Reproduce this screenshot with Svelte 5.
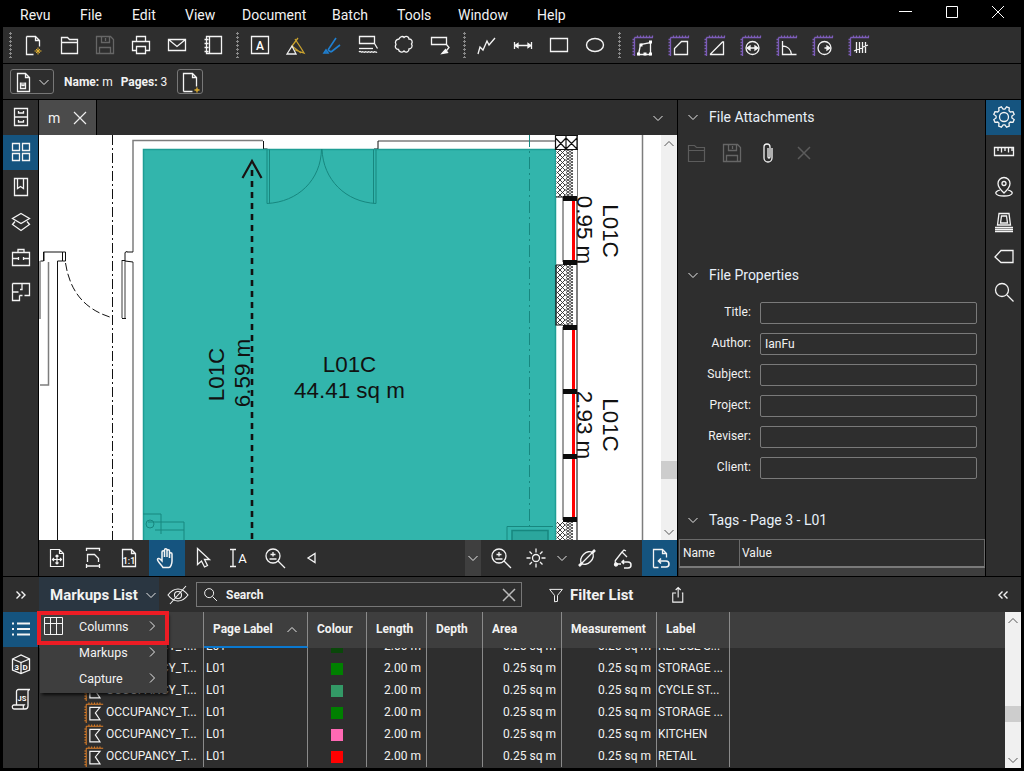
<script>
  const menu = [
    { name: 'Revu', w: 60 }, { name: 'File', w: 52 }, { name: 'Edit', w: 53 }, { name: 'View', w: 57 },
    { name: 'Document', w: 90 }, { name: 'Batch', w: 65 }, { name: 'Tools', w: 61 }, { name: 'Window', w: 79 }, { name: 'Help', w: 40 }
  ];

  // gear outline, easier to compute than to write out
  function gear() {
    let d = '';
    for (let i = 0; i < 8; i++) {
      const a = (i * Math.PI) / 4 - Math.PI / 8;
      const pts = [[8, -0.28], [10.5, -0.14], [10.5, 0.14], [8, 0.28]];
      for (const [r, o] of pts) {
        const x = 12 + r * Math.cos(a + o);
        const y = 12 + r * Math.sin(a + o);
        d += (d ? 'L' : 'M') + x.toFixed(1) + ' ' + y.toFixed(1);
      }
    }
    return d + 'z';
  }

  function ruler(col) {
    let d = 'M3.5 4.5H22M3.5 4.5V23';
    for (let i = 6; i <= 21; i += 3) d += `M${i + 0.5} 2.5v2M1.5 ${i + 0.5}h2`;
    return `<path stroke="${col}" d="${d}"/>`;
  }
  const rp = ruler('#7c5cb8');
  const dot = (x, y) => `<rect x="${x - 1.5}" y="${y - 1.5}" width="3" height="3" fill="#fff" stroke="none"/>`;

  const icons = {
    newdoc: '<path d="M5.5 3.5h9l4 4v6M14.5 3.5v4h4M5.5 3.5v18h7"/><path stroke="#e0b030" stroke-width="1" d="M17 14.500v7M13.500 18h7M15 16l4 4M19 16l-4 4"/>',
    folder: '<path d="M4.5 4.5h6l2 2h8v14h-16zM4.5 9.5h16"/>',
    save: '<path stroke="#666" d="M3.5 3.5h14l3 3v14h-17zM8.5 3.5v6h8v-6M12.5 5v3M6.5 20.5v-6h11v6"/>',
    print: '<path d="M7.5 8.5v-5h9v5M7.5 17.5h-4v-9h17v9h-4M7.5 13.5h9v7h-9z"/>',
    mail: '<path d="M3.5 6.5h17v11h-17zM3.5 6.5l8.5 7 8.5-7"/>',
    note: '<path d="M5.5 3.5h15v17h-15zM8.5 3.5v17M3.5 6.5h4M3.5 10.5h4M3.5 14.5h4M3.5 18.5h4"/>',
    textbox: '<path d="M3.5 3.5h17v17h-17z"/><text x="12" y="16.500" font-family="Roboto" font-size="12" font-weight="500" fill="#fff" stroke="none" text-anchor="middle">A</text>',
    hilite: '<path stroke="#c9a22e" d="M8 13l6-8M11 17l9 3-3-5-6-9M8 13l9 7"/><path d="M8 13l-5 8h9z" stroke="#eee"/>',
    pen: '<path stroke="#1f7fd0" stroke-width="1.6" d="M8 17l8-12M11 19l9-7M8 17l3 2M6 17l-2 3 4 0z"/>',
    stampwave: '<path d="M3.500 3.500h15v7h-15zM18.500 10.500l3 5M3 19c1.500-2 2 1 3 0s2 1 3 0 2 1 3 0 2 1 3 0 2 1 3 0 2 1 3 0"/><path d="M3 15.500h14"/>',
    cloud: '<path d="M7 6c1-3 4-3 5-1.500 2-2 5-1 5 1.500 3 0 4 3 2.500 5 1.500 2 0 5-2.500 5 0 3-3 4-5 2-2 2-5 1-5.500-1.500-3 0-4-3-2.500-5-1.500-3 0-5 3-5.500z"/>',
    callout: '<path d="M3.500 4.500h15v7h-15zM18.500 11.500l2.500 3-4 5"/><path fill="#fff" d="M14 20.500l3.500-4 2 3z"/>',
    poly: '<path d="M3 21l2-7 3 3 4-9 2 4 6-7"/>',
    dim: '<path d="M3 12.500h18M3.500 9v7M20.500 9v7M4 12.500l3-2v4zM20 12.500l-3-2v4z"/>',
    rect: '<path d="M3.500 5.500h17v13h-17z"/>',
    oval: '<ellipse cx="12" cy="12" rx="8.500" ry="6.500" stroke-width="1.400"/>',
    m1: rp + '<path d="M7.500 21.500l2-10 10-2v12z"/>' + dot(7.5, 21) + dot(10, 12) + dot(19.5, 9) + dot(19.5, 21) + dot(14, 21),
    m2: rp + '<path d="M7.500 21.500v-6l7-7h6v13z"/>',
    m3: rp + '<path d="M7.500 21.500v-.5l7-7 5-5h1v12.500z"/>',
    m4: rp + '<circle cx="13.500" cy="15" r="6.500"/><path d="M8 15h11M8 15l3-2v4zM19 15l-3-2v4z" fill="#fff"/>',
    m5: rp + '<path d="M7.500 8v13.500h14M7.500 13c5 0 8.500 3.500 9 8.500"/>',
    m6: rp + '<circle cx="13.500" cy="15" r="6.500"/><path d="M13.500 15h5M19 15l-3-2v4z" fill="#fff"/>',
    m7: rp + '<path d="M9.500 9v11M12.500 9v11M15.500 9v11M18.500 9v11M7 18l14-6"/>',

    cabinet: '<path d="M5.500 3.500h13v17h-13zM5.500 12h13M9.500 6v2h5v-2M9.500 15v2h5v-2"/>',
    grid: '<path d="M3.500 3.500h7v7h-7zM13.500 3.500h7v7h-7zM3.500 13.500h7v7h-7zM13.500 13.500h7v7h-7z"/>',
    book: '<path d="M5.500 3.500h13v17h-13zM8.500 3.500v10l3-2 3 2v-10"/>',
    layers: '<path d="M12 3.500l8.500 5-8.500 5-8.500-5zM6 11.500l-2.500 3 8.500 6 8.500-6-2.500-3"/>',
    toolbox: '<path d="M3.500 7.500h17v13h-17zM3.500 13.500h6M14.500 13.500h6M9 7.500V4.500h6v3M9.500 12v3M14.500 12v3"/>',
    plan: '<path d="M3.500 3.500h17v12h-5M3.500 3.500v17h7v-5M3.500 12h6M13 3.500v6h-2M10.500 15.500h3"/>',

    ruler2: '<path d="M2.500 7.500h19v8h-19zM6 7.500v3.500M9.500 7.500v5M13 7.500v3.500M16.500 7.500v5M20 7.500v3.500"/>',
    pin: '<path d="M12 2.500a6 6 0 0 1 6 6c0 4-6 9.500-6 9.500s-6-5.500-6-9.500a6 6 0 0 1 6-6z"/><circle cx="12" cy="8.500" r="2"/><path d="M8 15c-7 2-5 6 4 6s11-4 4-6"/>',
    stack: '<path d="M5.500 15l1.500-11.500h10l1.500 11.500zM8.500 13l1-7h5l1 7zM3 17.500h18M3 19.500h18M3 21.500h18"/>',
    tag: '<path d="M3 12l6-6.500h12v12h-12z"/>',
    search: '<circle cx="10" cy="10" r="6.500"/><path d="M15 15l6.500 6.500"/>',

    fit: '<path d="M5.500 3.500h9l4 4v13h-13zM14.500 3.500v4h4M12 9v9M7.500 13.500h9M10.500 10.500l1.500-1.500 1.500 1.500M10.500 16.500l1.500 1.500 1.500-1.500M9 12l-1.500 1.500 1.500 1.500M15 12l1.500 1.500-1.500 1.500" stroke-width="1.200"/>',
    fitw: '<path d="M5.500 5V2.500h13V5M6.500 16V8.500h7l4 4V16M5.500 22v-4M18.500 22v-4M6 20h12"/>',
    one: '<path d="M5.500 3.500h9l4 4v13h-13zM14.500 3.500v4h4"/><text x="12" y="18" font-family="Roboto" font-size="9" font-weight="500" fill="#fff" stroke="none" text-anchor="middle">1:1</text>',
    hand: '<path stroke-width="1.500" d="M8 21.500c-2-3-5.500-6-5.500-8 0-1.200 1.500-1.500 2.500-.5l2 2V6a1.200 1.200 0 0 1 2.500 0v5V4a1.200 1.200 0 0 1 2.500 0v7V5a1.200 1.200 0 0 1 2.500 0v7V8a1.200 1.200 0 0 1 2.500 0v7c0 3-1.500 6.500-3 6.500z"/>',
    cursor: '<path d="M6.500 2.500v16l4-3.500 3 6 3-1.500-3-6h5z"/>',
    textsel: '<path d="M3 3.500h6M3 20.500h6M6 3.500v17"/><text x="15.500" y="17" font-family="Roboto" font-size="13" fill="#fff" stroke="none" text-anchor="middle">A</text>',
    zoomin: '<circle cx="10" cy="10" r="7"/><path d="M15 15l7 7M10 6v4.500M7.500 8.500h5M6.500 13h7"/>',
    tri: '<path d="M16 7.500v9l-7-4.500z"/>',
    sun: '<circle cx="12" cy="12" r="3.500"/><path d="M12 2.500v4M12 17.500v4M2.500 12h4M17.500 12h4M5.500 5.500l2.500 2.500M16 16l2.500 2.500M18.500 5.500L16 8M8 16l-2.500 2.500"/>',
    dropper: '<ellipse cx="12" cy="12" rx="7.500" ry="5" transform="rotate(-45 12 12)"/><path d="M7 17L17 7"/><path stroke-width="2.600" d="M4 20l3-3M17 7l3-3"/>',
    clean: '<path d="M4 15l7-9 5 5M11 6l2-2 2 1M10 18H5l-1-3"/><path stroke-width="1.500" d="M13 14l-2 2 2 2M11 16h6a3 3 0 0 1 0 6h-4"/><circle cx="5" cy="18.500" r="1.500" fill="#fff"/>',
    docback: '<path d="M5.500 21.500v-18h9l4 4v4M14.500 3.500v4h4M5.500 21.500h5"/><path stroke-width="1.600" d="M13 12.500l-2.500 2.500 2.500 2.500M11 15h7a3 3 0 0 1 0 6h-5"/>',
    docsmall: '<path d="M6.500 3.500h8l4 4v14h-12zM14.500 3.500v4h4"/><path d="M9.500 12.500v6h5v-6M11 12.500v3h2v-3"/>',
    docplus: '<path d="M5.500 21.500v-18h9l4 4v9M14.500 3.500v4h4M5.500 21.500h9"/><path stroke="#e0b030" d="M19 17.500v5M16.500 20h5"/>',

    list: '<path stroke-width="1.800" d="M8 6.500h13M8 12h13M8 17.500h13M3 6.500h2M3 12h2M3 17.500h2"/>',
    cube: '<path d="M3.500 7l8.500-4 8.500 4v11l-8.500 3.500-8.500-3.500zM3.500 7l8.500 3.500 8.500-3.500M12 10.500v11"/><text x="7.800" y="18" font-family="Roboto" font-size="8" font-weight="700" fill="#fff" stroke="none" text-anchor="middle">3</text><text x="16.200" y="18" font-family="Roboto" font-size="8" font-weight="700" fill="#fff" stroke="none" text-anchor="middle">D</text>',
    js: '<path d="M7.500 18V4.500a2 2 0 0 1 2-2H21a2 2 0 0 0-2 2V19a3 3 0 0 1-3 3H5c-2 0-2.500-4 0-4h10c-1 1-1 3 0 4"/><text x="13" y="14" font-family="Roboto" font-size="7.500" font-weight="700" fill="#fff" stroke="none" text-anchor="middle">JS</text>',
    eyeoff: '<path stroke-width="1.100" d="M2 12c3-4 6-6 10-6s7 2 10 6c-3 4-6 6-10 6s-7-2-10-6zM4 21L20 3"/><circle cx="12" cy="12" r="3.500" stroke-width="1.100"/>',
    mag: '<circle cx="9.500" cy="9.500" r="6"/><path d="M14 14l6 6"/>',
    funnel: '<path d="M3.500 4.500h17l-6.500 8v8l-4 0.500v-8.500z"/>',
    share: '<path d="M8.500 9.500h-4v11h12v-11h-1M11 15V3M8 6l3-3 3 3"/>',
    flag: '<path stroke="#e08028" stroke-width="1.100" d="M3.500 3.500H22M3.500 3.500V24M6.500 1.500v2M9.500 1.500v2M12.500 1.500v2M15.500 1.500v2M18.500 1.500v2M1.500 6.500h2M1.500 9.500h2M1.500 12.500h2M1.500 15.500h2M1.500 18.500h2M1.500 21.500h2"/><path stroke-width="1.300" d="M7.500 7h11l-5 6 5 7.500h-11z"/>'
  };

  const toolGroups = [
    ['newdoc', 'folder', 'save', 'print', 'mail', 'note'],
    ['textbox', 'hilite', 'pen', 'stampwave', 'cloud', 'callout'],
    ['poly', 'dim', 'rect', 'oval'],
    ['m1', 'm2', 'm3', 'm4', 'm5', 'm6', 'm7']
  ];

  const fields = [
    { label: 'Title:', value: '' }, { label: 'Author:', value: 'IanFu' }, { label: 'Subject:', value: '' },
    { label: 'Project:', value: '' }, { label: 'Reviser:', value: '' }, { label: 'Client:', value: '' }
  ];

  const columns = ['', 'Page Label', 'Colour', 'Length', 'Depth', 'Area', 'Measurement', 'Label'];

  const rows = [
    { colour: '#0a470a', label: 'REFUSE S...' },
    { colour: '#008000', label: 'STORAGE ...' },
    { colour: '#339966', label: 'CYCLE ST...' },
    { colour: '#008000', label: 'STORAGE ...' },
    { colour: '#ff69b4', label: 'KITCHEN' },
    { colour: '#ff0000', label: 'RETAIL' }
  ];

  const clamps = [198, 262, 327, 391, 456, 519];
</script>

{#snippet ic(name, size = 24)}
  <svg class="ic" width={size} height={size} viewBox="0 0 24 24" fill="none" stroke="#f4f4f4" stroke-width="1.300">{@html icons[name]}</svg>
{/snippet}

{#snippet chev(dir = 'down', col = '#e8e8e8')}
  <svg class="ic" width="12" height="12" viewBox="0 0 12 12" fill="none" stroke={col} stroke-width="1">
    {#if dir === 'down'}<path d="M1.500 4l4.500 4.500L10.500 4" />
    {:else if dir === 'up'}<path d="M1.500 8l4.500-4.500L10.500 8" />
    {:else}<path d="M4 1.500L8.500 6 4 10.500" />{/if}
  </svg>
{/snippet}

<div class="app">
  <header class="menubar">
    {#each menu as m}
      <span class="menuitem" style="width:{m.w}px">{m.name}</span>
    {/each}
    <div class="winbtns">
      <span class="winbtn"><svg width="16" height="16" viewBox="0 0 16 16" fill="none" stroke="#fff" stroke-width="1"><path d="M1 5.500h13" /></svg></span>
      <span class="winbtn"><svg width="16" height="16" viewBox="0 0 16 16" fill="none" stroke="#fff" stroke-width="1"><path d="M2.500 .5h11v11h-11z" /></svg></span>
      <span class="winbtn"><svg width="16" height="16" viewBox="0 0 16 16" fill="none" stroke="#fff" stroke-width="1"><path d="M2 0l12 12M14 0L2 12" /></svg></span>
    </div>
  </header>

  <div class="toolbar">
    {#each toolGroups as group, i}
      <span class="grip" class:wide={i === 3}></span>
      {#each group as t}
        <span class="tool">{@render ic(t)}</span>
      {/each}
    {/each}
  </div>

  <div class="docbar">
    <div class="docbtn wide">{@render ic('docsmall')}{@render chev()}</div>
    <span class="docinfo"><b>Name:</b> m</span>
    <span class="docinfo"><b>Pages:</b> 3</span>
    <div class="docbtn addpage">{@render ic('docplus')}</div>
  </div>

  <div class="main">
    <nav class="rail">
      {#each ['cabinet', 'grid', 'book', 'layers', 'toolbox', 'plan'] as t}
        <span class="railbtn" class:on={t === 'grid'}>{@render ic(t)}</span>
      {/each}
    </nav>

    <section class="center">
      <div class="tabs">
        <div class="tab">
          <span>m</span>
          <svg width="14" height="14" viewBox="0 0 14 14" fill="none" stroke="#eee" stroke-width="1.200"><path d="M1 1l12 12M13 1L1 13" /></svg>
        </div>
        <span class="tabchev">{@render chev()}</span>
      </div>

      <div class="canvas">
        <svg class="sheet" width="622" height="405" viewBox="39 135 622 405">
          <defs>
            <pattern id="hatch" width="5" height="5" patternUnits="userSpaceOnUse">
              <path d="M0 0l5 5M5 0L0 5" stroke="#2a2a2a" stroke-width=".9" fill="none" />
            </pattern>
            <pattern id="hatch2" width="4" height="3" patternUnits="userSpaceOnUse">
              <path d="M0 0l4 3M4 0L0 3" stroke="#333" stroke-width=".9" fill="none" />
            </pattern>
          </defs>
          <rect x="39" y="135" width="622" height="405" fill="#fff" />

          <!-- walls and left door -->
          <g fill="none" stroke="#7d7d7d" stroke-width="1.500">
            <path d="M133 252V140.500H263" />
            <path d="M378 141H556" />
            <path d="M133 262V540" />
            <path d="M122 260V318M125 260V318" />
            <path d="M40 261V319M48.500 262V385H40" />
            <path d="M642.500 135V540" />
            <path d="M563 197V262M563 327V520" />
            <path d="M577 135V540" stroke-width="2" />
          </g>
          <g fill="none" stroke="#111" stroke-width="1">
            <path d="M263.500 141v8h4M378 141v8h-4" />
            <path d="M133 252h-6v-.5l-2 1v8h-3M133 262l-8-1" />
            <path d="M40.500 261h3v-9h19v9h-5v279M44 252v9M62.500 252v9h3v-9h-3" />
            <path d="M122 318.500h4" />
            <path d="M65.500 263C70 292 85 310 113 318" stroke-dasharray="8 3" />
            <path d="M112.500 135V540" stroke-dasharray="10 3 2 3" />
          </g>

          <!-- room -->
          <rect x="143.500" y="149.500" width="412" height="395" fill="#32b5ac" stroke="#1f9e95" stroke-width="1.500" />
          <g fill="none" stroke="#17877f" stroke-width="1">
            <path d="M267 149.500v54M269.500 149.500v54M376 149.500v54M373.500 149.500v54" />
            <path d="M267 203.500C298 202 321 180 321.500 149" />
            <path d="M322 149C323 180 346 202 376 203.500" />
            <path d="M529.500 135V540" stroke-dasharray="12 4 2 4" />
            <path d="M143 514h18v20M148 522h36v18M155 530h29" />
            <circle cx="150" cy="524" r="4" />
            <path d="M507 526.500h46M507 526.500V540" />
          </g>
          <path d="M512 540v-9.500h36V540" fill="#2ba69d" stroke="#17877f" stroke-width="1.500" />

          <!-- length arrow -->
          <path d="M252 170V540" stroke="#111" stroke-width="2.600" stroke-dasharray="6 5" fill="none" />
          <path d="M242.500 178L252 161l9.500 17" stroke="#1a1212" stroke-width="2.200" fill="none" />

          <!-- right hand wall -->
          <rect x="556" y="135" width="21" height="62" fill="#fff" />
          <rect x="556.500" y="150" width="9" height="47" fill="url(#hatch)" />
          <rect x="566" y="150" width="7" height="47" fill="url(#hatch2)" />
          <rect x="556.500" y="265" width="9" height="60" fill="url(#hatch)" />
          <rect x="566" y="265" width="7" height="60" fill="url(#hatch2)" />
          <rect x="556.500" y="522" width="9" height="18" fill="url(#hatch)" />
          <rect x="566" y="522" width="7" height="18" fill="url(#hatch2)" />
          <g fill="none" stroke="#111" stroke-width="1.200">
            <path d="M555 135.500h23M555 149.500h23M555.500 135v15M566 135v15M577 135v15M555.500 138l10.500 11M566 138L555.500 149M566 138l11 11M577 138l-11 11" />
            <path d="M556 197h7M556 265v60h7M556 265h7" />
          </g>
          <path d="M573.500 200V262M573.500 327V518" stroke="#f00" stroke-width="3" fill="none" />
          {#each clamps as y}
            <rect x="563" y={y - 2} width="14" height="5" fill="#0c0c0c" />
          {/each}

          <g font-family="Liberation Sans, sans-serif" font-size="22.400" fill="#111" text-anchor="middle">
            <text x="349.500" y="372">L01C</text>
            <text x="349.500" y="398">44.41 sq m</text>
            <text transform="translate(224 374.500) rotate(-90)">L01C</text>
            <text transform="translate(250 373) rotate(-90)">6.59 m</text>
            <text transform="translate(577 230) rotate(90)">0.95 m</text>
            <text transform="translate(603 231) rotate(90)">L01C</text>
            <text transform="translate(577 425) rotate(90)">2.93 m</text>
            <text transform="translate(603 425) rotate(90)">L01C</text>
          </g>
        </svg>
        <div class="vscroll">
          <span class="vcap">{@render chev('up', '#555')}</span>
          <div class="vtrack"><span class="vthumb page"></span></div>
          <span class="vcap">{@render chev('down', '#555')}</span>
        </div>
      </div>

      <div class="viewbar">
        <div class="viewgroup">
          {#each ['fit', 'fitw', 'one', 'hand', 'cursor', 'textsel', 'zoomin', 'tri'] as t}
            <span class="tool" class:on={t === 'hand'}>{@render ic(t)}</span>
          {/each}
        </div>
        <div class="viewgroup">
          <span class="minichev">{@render chev()}</span>
          <span class="tool">{@render ic('zoomin')}</span>
          <span class="tool sun">{@render ic('sun')}</span>
          <span class="suncaret">{@render chev()}</span>
          <span class="tool tight">{@render ic('dropper')}</span>
          <span class="tool">{@render ic('clean')}</span>
          <span class="tool on last">{@render ic('docback')}</span>
        </div>
      </div>
    </section>

    <aside class="panel">
      <div class="ptitle">{@render chev()}<span>File Attachments</span></div>
      <div class="attach">
        <svg class="ic" width="24" height="24" viewBox="0 0 24 24" fill="none" stroke="#5c5c5c" stroke-width="1.200"><path d="M4.500 4.500h6l2 2h8v14h-16zM4.500 9.500h16" /></svg>
        {@render ic('save')}
        <svg class="ic" width="24" height="24" viewBox="0 0 24 24" fill="none" stroke="#f4f4f4" stroke-width="1.300"><path d="M16 7v10a4 4 0 0 1-8 0V6a3 3 0 0 1 6 0v10a1 1 0 0 1-2 0V7" /></svg>
        <svg class="ic" width="24" height="24" viewBox="0 0 24 24" fill="none" stroke="#5c5c5c" stroke-width="1.500"><path d="M6 6l12 12M18 6L6 18" /></svg>
      </div>

      <div class="ptitle props">{@render chev()}<span>File Properties</span></div>
      <div class="form">
        {#each fields as f}
          <span class="flabel">{f.label}</span>
          <div class="finput">{f.value}</div>
        {/each}
      </div>

      <div class="ptitle tags">{@render chev()}<span>Tags - Page 3 - L01</span></div>
      <div class="taghead">
        <span class="tname">Name</span>
        <span class="tvalue">Value</span>
      </div>
      <div class="tagfoot"></div>
    </aside>

    <nav class="rail">
      {#each ['gear', 'ruler2', 'pin', 'stack', 'tag', 'search'] as t}
        <span class="railbtn" class:on={t === 'gear'}>
          {#if t === 'gear'}
            <svg class="ic" width="24" height="24" viewBox="0 0 24 24" fill="none" stroke="#f4f4f4" stroke-width="1.300"><path d={gear()} /><circle cx="12" cy="12" r="4.500" /></svg>
          {:else}
            {@render ic(t)}
          {/if}
        </span>
      {/each}
    </nav>
  </div>

  <section class="bottom">
    <div class="bhead">
      <span class="expand">
        <svg class="ic" width="12" height="12" viewBox="0 0 12 12" fill="none" stroke="#f4f4f4" stroke-width="1.400"><path d="M1.500 2.500L5 6l-3.500 3.500M6.500 2.500L10 6l-3.500 3.500" /></svg>
      </span>
      <div class="mlist"><b>Markups List</b>{@render chev()}</div>
      <span class="eye">{@render ic('eyeoff')}</span>
      <div class="searchbox">
        {@render ic('mag', 18)}
        <span>Search</span>
        <svg class="ic clear" width="14" height="14" viewBox="0 0 14 14" fill="none" stroke="#bbb" stroke-width="1.500"><path d="M1 1l12 12M13 1L1 13" /></svg>
      </div>
      <div class="filter">{@render ic('funnel', 18)}<b>Filter List</b></div>
      <span class="share">{@render ic('share', 20)}</span>
      <span class="collapse">
        <svg class="ic" width="12" height="12" viewBox="0 0 12 12" fill="none" stroke="#f4f4f4" stroke-width="1.400"><path d="M5.500 2.500L2 6l3.500 3.500M10.500 2.500L7 6l3.500 3.500" /></svg>
      </span>
    </div>

    <div class="bbody">
      <nav class="brail">
        <span class="railbtn on">{@render ic('list')}</span>
        <span class="railbtn">{@render ic('cube')}</span>
        <span class="railbtn">{@render ic('js')}</span>
      </nav>

      <div class="tablewrap">
        <div class="thead trow">
          {#each columns as c}
            <span class="th" class:sorted={c === 'Page Label'}>
              {c}
              {#if c === 'Page Label'}<span class="caret">{@render chev('up')}</span>{/if}
            </span>
          {/each}
        </div>
        <div class="tbody">
          {#each rows as r}
            <div class="trow row">
              <span class="td subject">{@render ic('flag', 22)}<span>OCCUPANCY_T...</span></span>
              <span class="td">L01</span>
              <span class="td swatchcell"><i class="swatch" style="background:{r.colour}"></i></span>
              <span class="td num">2.00 m</span>
              <span class="td"></span>
              <span class="td num">0.25 sq m</span>
              <span class="td num">0.25 sq m</span>
              <span class="td lbl">{r.label}</span>
            </div>
          {/each}
        </div>
      </div>

      <div class="vscroll list">
        <span class="vcap">{@render chev('up', '#555')}</span>
        <div class="vtrack"><span class="vthumb listthumb"></span></div>
        <span class="vcap">{@render chev('down', '#555')}</span>
      </div>

      <div class="ctxmenu">
        <div class="ctxitem">
          <svg class="ctxicon" width="20" height="20" viewBox="0 0 20 20" fill="none" stroke="#f4f4f4" stroke-width="1"><path d="M.5 1.500h18v17h-18zM.5 7.500h18M6.500 1.500v17M12.500 1.500v17" /></svg>
          <span>Columns</span>{@render chev('right')}
        </div>
        <div class="ctxitem"><span>Markups</span>{@render chev('right')}</div>
        <div class="ctxitem"><span>Capture</span>{@render chev('right')}</div>
        <span class="callout"></span>
      </div>
    </div>
  </section>
</div>

<style>
  :global(body) {
    margin: 0;
    background: #000;
  }
  .app {
    width: 1024px;
    height: 771px;
    box-sizing: border-box;
    padding: 0 3px 3px;
    background: #000;
    display: flex;
    flex-direction: column;
    font-family: Roboto, sans-serif;
    font-size: 12px;
    color: #f2f2f2;
    overflow: hidden;
  }
  .ic {
    display: block;
    flex: none;
  }

  .menubar {
    height: 27px;
    display: flex;
    align-items: center;
    padding-left: 17px;
    font-size: 14px;
    flex: none;
  }
  .menuitem {
    flex: none;
    padding-top: 3px;
  }
  .winbtns {
    margin-left: auto;
    display: flex;
    align-self: flex-start;
    padding-top: 6px;
  }
  .winbtn {
    width: 46px;
    height: 16px;
    display: flex;
    justify-content: center;
  }

  .toolbar {
    height: 36px;
    background: #2e2e2e;
    margin-bottom: 1px;
    padding-left: 1px;
    display: flex;
    align-items: center;
    flex: none;
  }
  .grip {
    width: 11px;
    height: 26px;
    flex: none;
    background: radial-gradient(circle at 1.500px 1.500px, #8a8a8a 1px, transparent 1.200px) 5px 0 / 3px 4px repeat-y;
  }
  .grip.wide {
    width: 12px;
  }
  .tool {
    width: 36px;
    height: 36px;
    flex: none;
    display: flex;
    align-items: center;
    justify-content: center;
  }
  .tool.on {
    background: #15547f;
  }

  .docbar {
    height: 35px;
    background: #2e2e2e;
    margin-bottom: 1px;
    display: flex;
    align-items: center;
    padding-left: 7px;
    flex: none;
  }
  .docbtn {
    width: 26px;
    height: 25px;
    box-sizing: border-box;
    border: 1px solid #777;
    border-radius: 3px;
    display: flex;
    align-items: center;
    justify-content: center;
  }
  .docbtn.wide {
    width: 44px;
    gap: 3px;
    margin-right: 10px;
    justify-content: flex-start;
  }
  .docbtn.addpage {
    margin-left: 2px;
  }
  .docinfo {
    margin-right: 8px;
  }
  .docinfo b {
    font-weight: 700;
  }

  .main {
    height: 476px;
    display: flex;
    gap: 1px;
    margin-bottom: 1px;
    flex: none;
  }
  .rail {
    width: 35px;
    flex: none;
    background: #2e2e2e;
    display: flex;
    flex-direction: column;
  }
  .railbtn {
    height: 35px;
    box-sizing: border-box;
    padding-bottom: 1px;
    flex: none;
    display: flex;
    align-items: center;
    justify-content: center;
  }
  .railbtn.on {
    background: #15547f;
  }

  .center {
    width: 638px;
    flex: none;
    display: flex;
    flex-direction: column;
  }
  .tabs {
    height: 35px;
    background: #2e2e2e;
    display: flex;
    justify-content: space-between;
    align-items: center;
    flex: none;
  }
  .tab {
    width: 58px;
    height: 35px;
    background: #4b4b4b;
    border-right: 1px solid #000;
    box-sizing: border-box;
    display: flex;
    align-items: center;
    gap: 13px;
    padding-left: 9px;
    font-size: 14px;
  }
  .tabchev {
    margin-right: 13px;
  }
  .canvas {
    height: 405px;
    display: flex;
    flex: none;
  }
  .sheet {
    display: block;
    flex: none;
  }
  .vscroll {
    width: 16px;
    background: #f0f0f0;
    display: flex;
    flex-direction: column;
    flex: none;
  }
  .vcap {
    height: 17px;
    display: flex;
    align-items: center;
    justify-content: center;
    flex: none;
  }
  .vtrack {
    flex: 1;
    display: flex;
    flex-direction: column;
  }
  .vthumb {
    display: block;
    background: #cdcdcd;
    height: 18px;
  }
  .vthumb.page {
    margin-top: 309px;
  }
  .vthumb.listthumb {
    margin-top: 77px;
    height: 16px;
  }
  .vscroll.list {
    height: 156px;
  }
  .viewbar {
    height: 36px;
    background: #2e2e2e;
    display: flex;
    justify-content: space-between;
    flex: none;
  }
  .viewgroup {
    display: flex;
    align-items: center;
  }
  .viewgroup .tool.on:not(.last) {
    margin-left: 2px;
  }
  .minichev {
    width: 16px;
    height: 36px;
    background: #3f3f3f;
    display: flex;
    align-items: center;
    justify-content: center;
    margin-right: 2px;
  }
  .sun {
    margin-left: -1px;
  }
  .suncaret {
    width: 16px;
    display: flex;
    justify-content: center;
  }
  .tool.tight {
    margin-left: -1px;
  }
  .tool.last {
    width: 35px;
    margin-left: 1px;
  }

  .panel {
    width: 307px;
    flex: none;
    background: #2e2e2e;
    display: flex;
    flex-direction: column;
  }
  .ptitle {
    height: 35px;
    box-sizing: border-box;
    padding-bottom: 2px;
    flex: none;
    display: flex;
    align-items: center;
    padding-left: 9px;
    gap: 10px;
    font-size: 14px;
    color: #e8f0f8;
  }
  .attach {
    height: 36px;
    flex: none;
    display: flex;
    align-items: center;
    gap: 12px;
    padding-left: 6px;
  }
  .ptitle.props {
    margin-top: 87px;
  }
  .form {
    display: grid;
    grid-template-columns: 73px 217px;
    column-gap: 9px;
    row-gap: 9px;
    margin-top: 9px;
  }
  .flabel {
    text-align: right;
    line-height: 20px;
    letter-spacing: .1px;
  }
  .finput {
    height: 22px;
    box-sizing: border-box;
    border: 1px solid #7a7a7a;
    border-radius: 2px;
    padding: 0 0 0 4px;
    line-height: 20px;
  }
  .ptitle.tags {
    margin-top: 23px;
    padding-bottom: 0;
    margin-bottom: 2px;
  }
  .taghead {
    height: 29px;
    box-sizing: border-box;
    margin: 0 0 0 1px;
    border: 1px solid #6a6a6a;
    border-bottom: 2px solid #7a7a7a;
    display: flex;
    align-items: center;
    flex: none;
  }
  .tname {
    width: 60px;
    height: 100%;
    border-right: 1px solid #6a6a6a;
    display: flex;
    align-items: center;
    padding-left: 3px;
    box-sizing: border-box;
  }
  .tvalue {
    padding-left: 2px;
  }
  .tagfoot {
    flex: 1;
    margin-left: 1px;
    background: #3e3e3e;
  }

  .bottom {
    height: 191px;
    display: flex;
    flex-direction: column;
    flex: none;
  }
  .bhead {
    height: 35px;
    flex: none;
    background: #2e2e2e;
    display: flex;
    align-items: center;
  }
  .expand {
    width: 36px;
    display: flex;
    justify-content: center;
    flex: none;
    padding-right: 1px;
    box-sizing: border-box;
  }
  .mlist {
    width: 120px;
    height: 35px;
    background: #2a3641;
    display: flex;
    align-items: center;
    gap: 7px;
    padding-left: 11px;
    box-sizing: border-box;
    font-size: 15px;
    flex: none;
  }
  .eye {
    width: 37px;
    display: flex;
    justify-content: center;
    flex: none;
  }
  .searchbox {
    width: 326px;
    height: 25px;
    box-sizing: border-box;
    border: 1px solid #777;
    display: flex;
    align-items: center;
    gap: 6px;
    padding-left: 5px;
    font-weight: 700;
    flex: none;
  }
  .clear {
    margin-left: auto;
    margin-right: 5px;
  }
  .filter {
    margin-left: 25px;
    display: flex;
    align-items: center;
    gap: 5px;
    font-size: 15px;
    flex: none;
  }
  .share {
    margin-left: 36px;
    flex: none;
  }
  .collapse {
    margin-left: auto;
    margin-right: 12px;
  }

  .bbody {
    height: 156px;
    display: flex;
    position: relative;
  }
  .brail {
    width: 35px;
    margin-right: 1px;
    background: #2e2e2e;
    display: flex;
    flex-direction: column;
    flex: none;
  }
  .tablewrap {
    width: 966px;
    flex: none;
    background: #2e2e2e;
    display: flex;
    flex-direction: column;
    overflow: hidden;
  }
  .trow {
    display: grid;
    grid-template-columns: 165px 104px 59px 60px 56px 79px 95px 73px;
  }
  .thead {
    height: 36px;
    background: #3e3e3e;
    flex: none;
    position: relative;
    z-index: 1;
  }
  .th {
    display: flex;
    align-items: center;
    padding: 0 0 2px 9px;
    font-weight: 700;
    border-right: 1px solid #8a8a8a;
    box-sizing: border-box;
  }
  .th.sorted {
    padding-bottom: 0;
    border-bottom: 2px solid #0a78d0;
  }
  .caret {
    margin-left: 13px;
    padding-top: 2px;
  }
  .tbody {
    flex: 1;
    overflow: hidden;
  }
  .row {
    height: 22px;
  }
  .row:first-child {
    margin-top: -13px;
  }
  .td {
    display: flex;
    align-items: center;
    padding: 0 2px;
    border-right: 1px solid #8a8a8a;
    box-sizing: border-box;
    white-space: nowrap;
    overflow: hidden;
  }
  .td.lbl {
    padding-left: 1px;
  }
  .subject {
    padding-left: 44px;
    overflow: visible;
  }
  .subject span {
    margin-left: 1px;
  }
  .num {
    justify-content: flex-end;
    padding-right: 5px;
  }
  .swatchcell {
    justify-content: center;
    padding-top: 2px;
  }
  .swatch {
    display: block;
    width: 12px;
    height: 12px;
  }

  .ctxmenu {
    position: absolute;
    left: 37px;
    top: 1px;
    width: 127px;
    padding-bottom: 2px;
    background: #3e3e3e;
    box-shadow: 2px 2px 3px rgba(0, 0, 0, .75);
    z-index: 2;
  }
  .ctxitem {
    height: 26px;
    position: relative;
    display: flex;
    align-items: center;
    justify-content: space-between;
    padding: 0 9px 0 39px;
    font-size: 12.500px;
  }
  .ctxicon {
    position: absolute;
    left: 4px;
    top: 3px;
  }
  .callout {
    position: absolute;
    left: -3px;
    top: -2px;
    width: 132px;
    height: 34px;
    box-sizing: border-box;
    border: 4px solid #ed1c24;
  }
</style>
